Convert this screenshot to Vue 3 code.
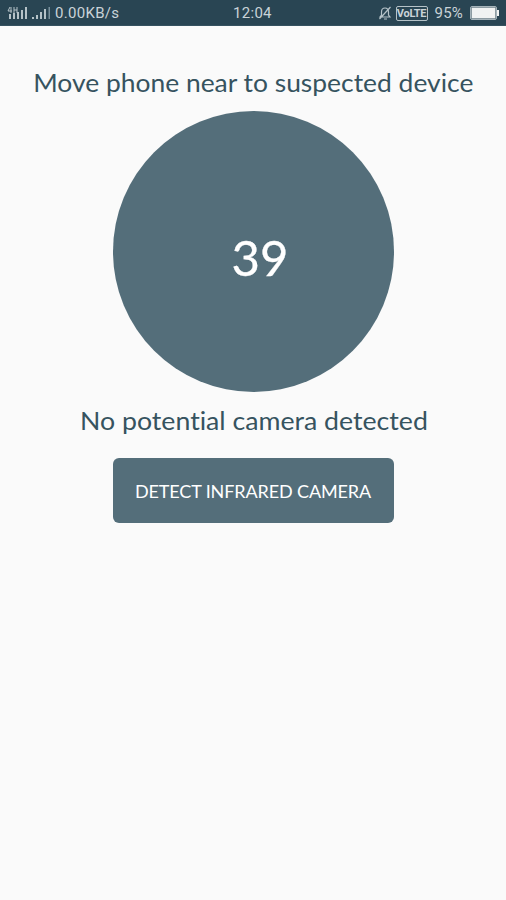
<template>
  <div class="screen">
    <header class="status-bar">
      <svg class="signal" width="44" height="16" viewBox="0 0 44 16">
        <g class="muted">
          <path d="M3 2L1 6h4M4 2v6M7 2v6M10 2v6M7 5h3" class="line" />
          <path d="M2 9h2v5H2zM6 8h2v6H6zM10 7h2v7h-2zM14 5h2v9h-2zM18 2h2v12h-2z" />
          <path d="M25 12h2v2h-2zM29 10h2v4h-2zM33 7h2v7h-2zM37 4h2v10h-2z" />
        </g>
        <path d="M41.500 2h1.500v12h-1.500z" class="faint" />
      </svg>
      <span class="speed">0.00KB/s</span>
      <span class="clock">{{ clock }}</span>
      <div class="right">
        <svg class="bell" width="14" height="14" viewBox="0 0 14 14">
          <path d="M2 11h10l-1.500-2V6c0-2.400-1.200-4-3.500-4S3.500 3.600 3.500 6v3L2 11zM6 13h3M12.500 1L1.500 13" />
        </svg>
        <span class="volte">VoLTE</span>
        <span class="percent">{{ battery }}%</span>
        <svg class="battery" width="29" height="14" viewBox="0 0 29 14">
          <rect x=".5" y=".5" width="26" height="13" rx="1.500" class="shell" />
          <rect x="1.500" y="1.500" width="24" height="11" class="level" />
          <path d="M27 4h2v6h-2z" class="level" />
        </svg>
      </div>
    </header>

    <main class="content">
      <p class="hint">Move phone near to suspected device</p>
      <div class="meter">
        <span class="reading">{{ reading }}</span>
      </div>
      <p class="result">No potential camera detected</p>
      <button class="detect" type="button"><span>DETECT INFRARED CAMERA</span></button>
    </main>
  </div>
</template>

<script setup>
import { ref } from 'vue'

const clock = ref('12:04')
const battery = ref(95)
const reading = ref(39)
</script>

<style>
body {
  background: #fafafa;
}
</style>

<style scoped>
.screen {
  min-height: 900px;
  background: #fafafa;
  font-family: Lato, sans-serif;
}

.status-bar {
  display: grid;
  grid-template-columns: 48px 178px 1fr auto;
  align-items: center;
  box-sizing: border-box;
  height: 26px;
  padding: 1px 7px 0 7px;
  background: #294553;
  border-bottom: 1px solid #365260;
  color: #c9d3d8;
  font-family: Roboto, sans-serif;
  font-size: 15px;
  line-height: 24px;
  white-space: nowrap;
}

.muted {
  fill: #b5c2c8;
}

.line {
  fill: none;
  stroke: #b5c2c8;
}

.faint {
  fill: #78909c;
}

.speed,
.clock {
  letter-spacing: 0.3px;
}

.right {
  display: flex;
  align-items: center;
}

.bell {
  margin-right: 4px;
  fill: none;
  stroke: #b5c2c8;
  stroke-width: 1.2;
}

.volte {
  box-sizing: border-box;
  width: 32px;
  height: 15px;
  margin-right: 7px;
  border: 1px solid #b5c2c8;
  border-radius: 2px;
  font-size: 11px;
  font-weight: 700;
  letter-spacing: -0.3px;
  line-height: 13px;
  text-align: center;
}

.percent {
  margin-right: 7px;
  letter-spacing: 0.2px;
}

.shell {
  fill: none;
  stroke: #a5b3ba;
}

.level {
  fill: #f0f2f2;
}

.content {
  display: flex;
  flex-direction: column;
  align-items: center;
  padding-top: 40px;
}

/* slightly widened letterforms */
.hint,
.result {
  margin: 0;
  padding-left: 1px;
  color: #36535f;
  font-size: 25px;
  font-variant-ligatures: none;
  line-height: 32px;
  white-space: nowrap;
}

.hint {
  transform: scaleX(1.057);
}

.meter {
  display: flex;
  align-items: center;
  justify-content: center;
  box-sizing: border-box;
  width: 281px;
  height: 281px;
  margin-top: 13px;
  padding: 11px 0 0 14px;
  border-radius: 50%;
  background: #546e7a;
}

.reading {
  color: #fff;
  font-size: 49px;
  line-height: 60px;
  -webkit-text-stroke: 0.3px #fff;
}

.result {
  margin-top: 12px;
  transform: scaleX(1.067);
}

.detect {
  width: 281px;
  height: 65px;
  margin-top: 22px;
  padding: 0;
  border: 0;
  border-radius: 6px;
  background: #546e7a;
  color: #fff;
  font-family: inherit;
  font-size: 18px;
  letter-spacing: -0.12px;
}
</style>
